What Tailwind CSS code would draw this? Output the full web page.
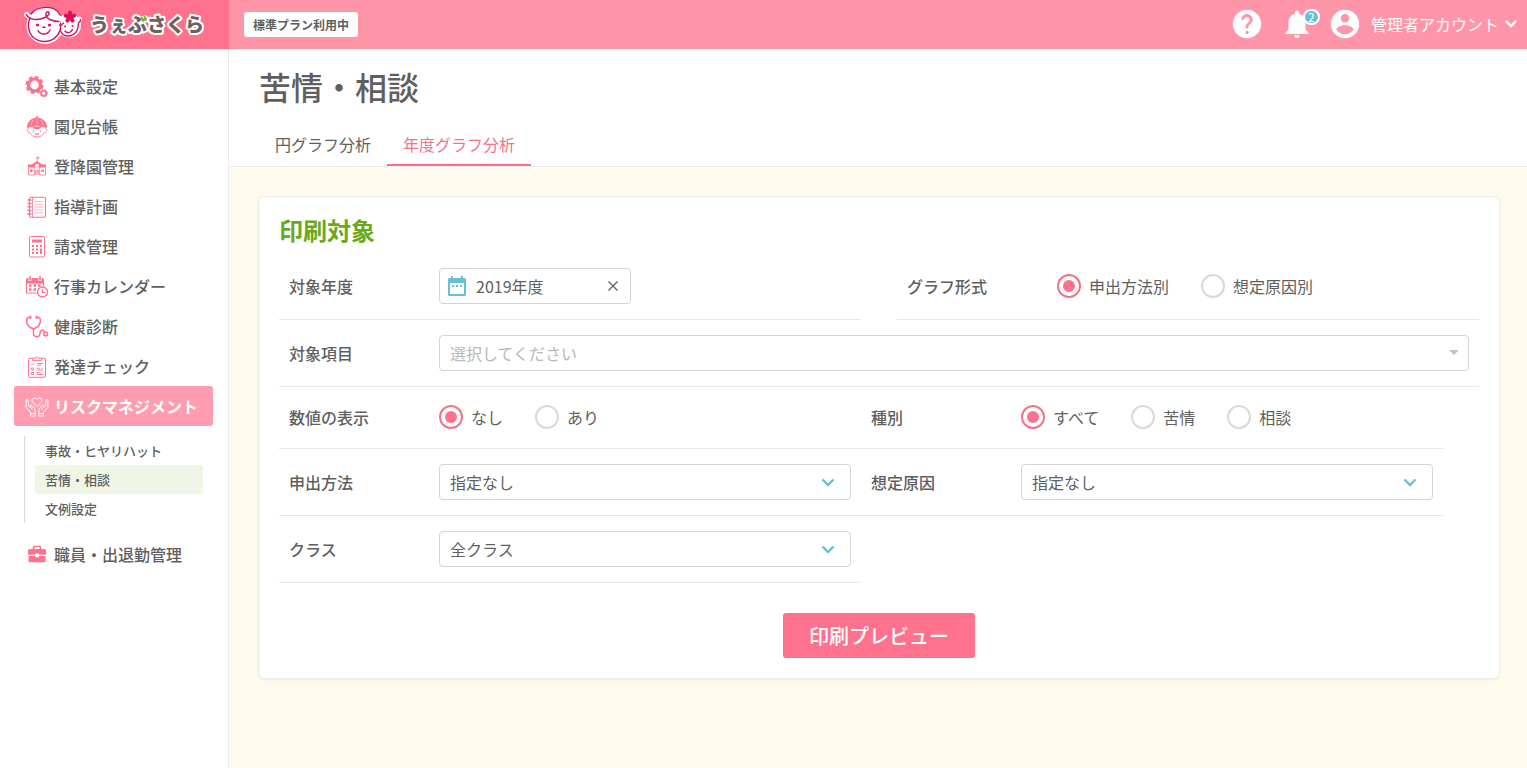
<!DOCTYPE html>
<html lang="ja">
<head>
<meta charset="utf-8">
<title>苦情・相談 | うぇぶさくら</title>
<script src="https://cdn.jsdelivr.net/npm/@tailwindcss/browser@4"></script>
</head>
<body class="flex min-h-screen flex-col bg-white font-['Noto_Sans_CJK_JP',sans-serif] text-base text-[#5f5f5f]">

<header class="flex h-[49px] bg-[#ff95a8]">
  <a href="#" aria-label="うぇぶさくら" class="block w-[229px] shrink-0 bg-[#ff728d]">
    <svg class="h-[49px] w-[229px]" viewBox="0 0 229 49">
      <g fill="#fff" stroke="#fff" stroke-width="5" stroke-linejoin="round">
        <circle cx="45" cy="25.500" r="16"/><circle cx="69" cy="25.500" r="9.500"/>
        <path d="M26.500 14.500l6 5M78 22l1.500-3" stroke-linecap="round"/>
      </g>
      <g fill="none" stroke="#cf1465" stroke-width="1.400" stroke-linecap="round" stroke-linejoin="round">
        <path d="M26 14.500c3 5 10 6 16 4 4-1 8-4 7-6s-4 0-3 3c1 4 8 6 13 6M30 18c-4 10 0 22 13 23.500 12 .5 19-9 17.500-18.500M31 14C38 5 56 5 60 15"/>
        <path d="M59.500 25c2 1 3-1 4-2M60.500 31c4 8 16 6 17.500-4l.5-4c1-.5 2-1.500 2-3.500M38 30.500c2.500 5 10 4.500 12-.5M65 31c2 3 6 2 7.500-1.500M43 27.500q1-1 2 0"/>
      </g>
      <g fill="#cf1465"><circle cx="37.500" cy="25" r="1.600"/><circle cx="49.500" cy="25" r="1.600"/><circle cx="65" cy="26.500" r="1"/><circle cx="72.500" cy="26" r="1"/></g>
      <g fill="#e00b5e" transform="translate(70 17)">
        <circle r="3"/><ellipse cy="-3.800" rx="2.100" ry="2.600"/><ellipse cy="-3.800" rx="2.100" ry="2.600" transform="rotate(72)"/><ellipse cy="-3.800" rx="2.100" ry="2.600" transform="rotate(144)"/><ellipse cy="-3.800" rx="2.100" ry="2.600" transform="rotate(216)"/><ellipse cy="-3.800" rx="2.100" ry="2.600" transform="rotate(288)"/>
      </g>
      <text x="90" y="32" font-size="19" font-weight="900" fill="#6b6260" stroke="#fff" stroke-width="4" stroke-linejoin="round" paint-order="stroke">うぇぶさくら</text>
      <path d="M141.500 17.500l1.500 3M144.500 16.500l1.500 3" stroke="#7fc31c" stroke-width="2" stroke-linecap="round"/>
    </svg>
  </a>
  <div class="flex flex-1 items-center pr-[10px] pl-[15px] text-white">
    <span class="rounded-[3px] bg-white px-[9px] text-xs leading-[25px] font-bold text-[#5f5f5f]">標準プラン利用中</span>
    <div class="ml-auto flex h-12 items-center self-start">
      <button type="button" aria-label="ヘルプ">
        <svg class="size-[34px]" viewBox="0 0 24 24" fill="currentColor"><path d="M12 2C6.480 2 2 6.480 2 12s4.480 10 10 10 10-4.480 10-10S17.520 2 12 2zm1 17h-2v-2h2v2zm2.070-7.750l-.9.920C13.450 12.900 13 13.500 13 15h-2v-.5c0-1.100.45-2.100 1.170-2.830l1.240-1.260c.37-.36.59-.86.59-1.410 0-1.100-.9-2-2-2s-2 .9-2 2H8c0-2.210 1.790-4 4-4s4 1.790 4 4c0 .88-.36 1.680-.93 2.250z"/></svg>
      </button>
      <button type="button" aria-label="お知らせ 2件" class="relative ml-4">
        <svg class="size-[34px]" viewBox="0 0 24 24" fill="currentColor"><path d="M12 22c1.100 0 2-.9 2-2h-4c0 1.100.89 2 2 2zm6-6v-5c0-3.070-1.640-5.640-4.500-6.320V4c0-.83-.67-1.500-1.500-1.500s-1.500.67-1.500 1.500v.68C7.630 5.360 6 7.920 6 11v5l-2 2v1h16v-1l-2-2z"/></svg>
        <span class="absolute top-[2px] left-[23px] h-4 w-[17px] rounded-full border-2 border-white bg-[#67bfd9] text-center text-[11px] leading-3 font-medium">2</span>
      </button>
      <button type="button" class="ml-[14px] flex items-center">
        <svg class="size-[34px]" viewBox="0 0 24 24" fill="currentColor"><path d="M12 2C6.480 2 2 6.480 2 12s4.480 10 10 10 10-4.480 10-10S17.520 2 12 2zm0 3c1.660 0 3 1.340 3 3s-1.340 3-3 3-3-1.340-3-3 1.340-3 3-3zm0 14.200c-2.500 0-4.710-1.280-6-3.220.03-1.990 4-3.080 6-3.080 1.990 0 5.970 1.090 6 3.080-1.290 1.940-3.500 3.220-6 3.220z"/></svg>
        <span class="ml-[9px] leading-6">管理者アカウント</span>
        <svg class="ml-[6px] h-2 w-3" viewBox="0 0 12 8" fill="none" stroke="currentColor" stroke-width="2.400"><path d="M.8.900L6 6.100 11.200.900"/></svg>
      </button>
    </div>
  </div>
</header>

<div class="flex flex-1">
  <nav class="w-[229px] shrink-0 border-r border-[#ebebeb] pt-[17px] pr-[15px] pl-[14px] font-medium">
    <ul class="text-[#ff728d]">
      <li><a href="#" class="flex h-10 items-center gap-[5px] pl-[11px]">
        <svg class="size-6" viewBox="0 -1 24 24" fill="none" stroke="currentColor"><circle cx="9.500" cy="10" r="6" stroke-width="3.200"/><circle cx="9.500" cy="10" r="7.800" stroke-width="2.400" stroke-dasharray="3.800 2.326"/><circle cx="18.700" cy="18.200" r="2.600" stroke-width="1.800"/><circle cx="18.700" cy="18.200" r="3.600" stroke-width="1" stroke-dasharray="1.700 1.127"/></svg>
        <span class="text-[#5f5f5f]">基本設定</span></a></li>
      <li><a href="#" class="flex h-10 items-center gap-[5px] pl-[11px]">
        <svg class="size-6" viewBox="0 -1 24 24" fill="none" stroke="currentColor"><path d="M2.500 12.500C2.500 6.500 7 3 12 3s9.500 3.500 9.500 9.500c-5-2-14-2-19 0z" fill="currentColor"/><path d="M11 2h2" stroke-width="1.500"/><path d="M12 4v6.500M8 5q-2 3-2 5.500M16 5q2 3 2 5.500" stroke="#fff" stroke-width=".5" opacity=".8"/><path d="M4 13.500c-3 0-2 4 .5 4C6 20.500 9 22 12 22s6-1.500 7.500-4.500c2.500 0 3.500-4 .5-4" stroke-width=".9"/><path d="M8 12.500q4 3 8 0z" fill="currentColor"/><path d="M8.500 15.500v1.200M15.500 15.500v1.200" stroke-width="1.300"/><path d="M10 18.500q2 1.500 4 0" stroke-width="1.100"/></svg>
        <span class="text-[#5f5f5f]">園児台帳</span></a></li>
      <li><a href="#" class="flex h-10 items-center gap-[5px] pl-[11px]">
        <svg class="size-6" viewBox="0 -1 24 24" fill="currentColor"><path d="M11.600 1.500l3.400 1.300-2.600 1.200v2.200l5 3.300H21v3H3v-3h3.600l5-3.300z"/><circle cx="12" cy="11" r="1.900" fill="#fff"/><path d="M12 10v1.200h1" fill="none" stroke="currentColor" stroke-width=".7"/><g fill="none" stroke="currentColor" stroke-width=".8"><path d="M3.500 12.500v7.500h5.800v-8M20.500 12.500v7.500h-5.800v-8M10.500 20v-4.500h3V20M12 15.500V20"/></g><path d="M5 14.500h2.500v2.500H5zM16.500 14.500H19v2.500h-2.500z"/></svg>
        <span class="text-[#5f5f5f]">登降園管理</span></a></li>
      <li><a href="#" class="flex h-10 items-center gap-[5px] pl-[11px]">
        <svg class="size-6" viewBox="0 -1 24 24" fill="none" stroke="currentColor"><rect x="4.500" y="2.200" width="16" height="20" rx="1.500" stroke-width="1.100"/><path d="M7.500 2.500v19.500" stroke-width=".8"/><path d="M3 5h3M3 8.500h3M3 12h3M3 15.500h3M3 19h3" stroke-width="1.500" stroke-linecap="round"/><path d="M10 6.500h8M10 9.300h8M10 12.100h8M10 14.900h8M10 17.700h8" stroke-width=".7" opacity=".75"/></svg>
        <span class="text-[#5f5f5f]">指導計画</span></a></li>
      <li><a href="#" class="flex h-10 items-center gap-[5px] pl-[11px]">
        <svg class="size-6" viewBox="0 -1 24 24" fill="none" stroke="currentColor"><rect x="4.500" y="1.500" width="15" height="20.500" rx="1.200" stroke-width="1"/><path d="M7 6h10" stroke-width="3"/><path d="M7 11h2M11 11h2M7 14.500h2M11 14.500h2M7 18h2M11 18h2M15 11h2" stroke-width="1.900"/><path d="M16 13.500V19" stroke-width="2"/></svg>
        <span class="text-[#5f5f5f]">請求管理</span></a></li>
      <li><a href="#" class="flex h-10 items-center gap-[5px] pl-[11px]">
        <svg class="size-6" viewBox="0 -1 24 24" fill="none" stroke="currentColor"><path d="M1.500 8V4.500q0-1 1-1h15q1 0 1 1V8z" fill="currentColor"/><path d="M5 1v5M15 1v5" stroke="#fff" stroke-width="3"/><path d="M5 1v4.500M15 1v4.500" stroke-width="1.600"/><path d="M1.500 7v10q0 1 1 1H12M18.500 7v4" stroke-width="1.200"/><path d="M4 10.500h2.500M8.500 10.500H11M13 10.500h2.500M4 14.500h2.500M8.500 14.500H11" stroke-width="2.400"/><circle cx="17.500" cy="17" r="5" stroke-width="1.300" fill="#fff"/><path d="M17.500 14v3.500h2.700" stroke-width="1.100"/></svg>
        <span class="text-[#5f5f5f]">行事カレンダー</span></a></li>
      <li><a href="#" class="flex h-10 items-center gap-[5px] pl-[11px]">
        <svg class="size-6" viewBox="0 -1 24 24" fill="none" stroke="currentColor" stroke-width="1.500" stroke-linecap="round"><path d="M5.500 2.200Q2 2 1.600 4.500C1.300 9 4 12.500 8.500 14c4.500-1.500 7.200-5 6.900-9.500Q15 2 11.500 2.200"/><path d="M5.500 1.500v1.600M11.500 1.500v1.600" stroke-width="1.800"/><path d="M8.500 14v4c0 5 6.500 5 6.500.5 0-4 4-4.500 4.500-1.200"/><circle cx="20.700" cy="19" r="1.900"/></svg>
        <span class="text-[#5f5f5f]">健康診断</span></a></li>
      <li><a href="#" class="flex h-10 items-center gap-[5px] pl-[11px]">
        <svg class="size-6" viewBox="0 -1 24 24" fill="none" stroke="currentColor"><rect x="3.500" y="3.300" width="17" height="19" rx="1.500" stroke-width="1"/><path d="M7.500 5.500V3.200h2.700q1.800-2.600 3.600 0h2.700v2.300z" fill="#fff" stroke-width=".9"/><path d="M6.300 9l1 1.200 2-2.500" stroke-width=".9"/><path d="M6.300 13h2.200v2H6.300zM6.300 17.500h2.200v2H6.300z" stroke-width=".9"/><path d="M12 8.500h6M12 10.200h4.500M11.500 13.200h3.500M16 13.200h2M11.500 15h6M11.500 17.700h4M11.500 19.500h6.500" stroke-width=".9"/></svg>
        <span class="text-[#5f5f5f]">発達チェック</span></a></li>
      <li><a href="#" class="flex h-10 items-center gap-[5px] rounded-[3px] bg-[#ff9caf] pl-[11px] font-bold text-white">
        <svg class="size-6" viewBox="0 0 24 24" fill="none" stroke="currentColor" stroke-width="1" stroke-linejoin="round"><path d="M12 12.500L7.500 8.200C5.500 5.500 9.500 2 12 5.500c2.500-3.500 6.500 0 4.500 2.700z"/><path d="M1.200 6v7.500l4.300 5V22h4.700v-5.500c0-2-3.200-5.500-4.200-5.500s-1.200.8-.6 1.700L7.500 15.500M1.200 6q1.800-1 2 .5l.3 5 2 2.500M22.800 6v7.500l-4.300 5V22h-4.700v-5.500c0-2 3.200-5.500 4.200-5.500s1.200.8.6 1.700l-2.100 2.800M22.800 6q-1.800-1-2 .5l-.3 5-2 2.500M5.500 19.500h4.700M13.800 19.500h4.700"/></svg>
        <span>リスクマネジメント</span></a>
        <ul class="mt-[10px] mr-[10px] mb-[11px] ml-[10px] border-l border-[#d9d9d9] pl-[10px] text-[13px] leading-[29px] text-[#5f5f5f]">
          <li><a href="#" class="block pl-[10px]">事故・ヒヤリハット</a></li>
          <li><a href="#" aria-current="page" class="block rounded-[2px] bg-[#f0f6e6] pl-[10px]">苦情・相談</a></li>
          <li><a href="#" class="block pl-[10px]">文例設定</a></li>
        </ul></li>
      <li><a href="#" class="flex h-10 items-center gap-[5px] pl-[11px]">
        <svg class="size-6" viewBox="0 0 24 24" fill="currentColor"><path d="M8.500 8V5.500q0-1 1-1h5q1 0 1 1V8" fill="none" stroke="currentColor" stroke-width="1.700"/><path d="M4.500 7h15Q21 7 21 8.500V12.700h-7v-1.200h-4v1.200H3V8.500Q3 7 4.500 7zM3.500 14H10v1.200h4V14h6.500v5q0 1.300-1.300 1.300H4.800q-1.300 0-1.300-1.300z"/></svg>
        <span class="text-[#5f5f5f]">職員・出退勤管理</span></a></li>
    </ul>
  </nav>

  <main class="flex min-w-0 flex-1 flex-col bg-[#fffaee]">
    <div class="border-b border-[#ebebeb] bg-white pt-[13px] pl-[30px]">
      <h1 class="text-[32px] leading-[48px] font-medium">苦情・相談</h1>
      <div role="tablist" class="mt-[14px] flex">
        <button type="button" role="tab" aria-selected="false" class="h-[42px] px-4 pb-[2px]">円グラフ分析</button>
        <button type="button" role="tab" aria-selected="true" class="h-[42px] border-b-2 border-[#f4728b] px-4 text-[#f4728b]">年度グラフ分析</button>
      </div>
    </div>

    <form class="mt-[30px] mr-7 mb-[30px] ml-[30px] flex flex-col rounded-[5px] bg-white px-5 pt-[15px] pb-5 shadow-[0_0_0_1px_#eeece6,0_1px_3px_rgba(0,0,0,0.12)]">
      <h2 class="mb-[5px] text-2xl leading-9 font-bold text-[#6aa91a]">印刷対象</h2>

      <div class="grid grid-cols-2 gap-9">
        <div class="flex h-[67px] items-center border-b border-[#e8e8e8] px-[10px]">
          <label for="year" class="w-[150px] shrink-0 font-medium">対象年度</label>
          <div class="flex h-9 w-[192px] items-center rounded-[4px] border border-[#d5d5d5] px-2">
            <svg class="h-5 w-[18px] shrink-0" viewBox="0 0 18 20"><path d="M3 0h2v2h8V0h2v2h1.500Q18 2 18 3.500v15q0 1.500-1.500 1.500h-15Q0 20 0 18.500v-15Q0 2 1.500 2H3zM2 7v11h14V7z" fill="#67bfd9" fill-rule="evenodd"/><path d="M4 9h2v2H4zM8 9h2v2H8zM12 9h2v2h-2z" fill="#67bfd9"/></svg>
            <input id="year" type="text" value="2019年度" class="ml-[10px] w-0 flex-1 outline-none">
            <button type="button" aria-label="クリア" class="flex size-[18px] items-center justify-center"><svg class="size-[10px]" viewBox="0 0 10 10" stroke="#5f5f5f" stroke-width="1.300"><path d="M.5.500l9 9M9.500.500l-9 9"/></svg></button>
          </div>
        </div>
        <div role="radiogroup" aria-labelledby="l-graph" class="flex h-[67px] items-center border-b border-[#e8e8e8] px-[10px]">
          <span id="l-graph" class="w-[150px] shrink-0 font-medium">グラフ形式</span>
          <div class="flex gap-8">
            <label class="flex items-center gap-2"><input type="radio" name="graph" checked class="size-6 appearance-none rounded-full border-2 border-[#d9d9d9] bg-clip-content p-1 checked:border-[#f0748a] checked:bg-[#ff728d]">申出方法別</label>
            <label class="flex items-center gap-2"><input type="radio" name="graph" class="size-6 appearance-none rounded-full border-2 border-[#d9d9d9] bg-clip-content p-1 checked:border-[#f0748a] checked:bg-[#ff728d]">想定原因別</label>
          </div>
        </div>
      </div>

      <div class="flex h-[67px] items-center border-b border-[#e8e8e8] px-[10px]">
        <label for="item" class="w-[150px] shrink-0 font-medium">対象項目</label>
        <div class="relative flex-1">
          <select id="item" class="block h-9 w-full appearance-none rounded-[4px] border border-[#d5d5d5] px-[10px] text-[#b8b8b8]"><option>選択してください</option></select>
          <svg class="pointer-events-none absolute top-[15px] right-[10px] h-[5px] w-[10px]" viewBox="0 0 10 5" fill="#c4c4c4"><path d="M0 0h10L5 5z"/></svg>
        </div>
      </div>

      <div class="mr-9 grid grid-cols-2">
        <div role="radiogroup" aria-labelledby="l-num" class="flex h-[62px] items-center border-b border-[#e8e8e8] px-[10px] pb-px">
          <span id="l-num" class="w-[150px] shrink-0 font-medium">数値の表示</span>
          <div class="flex gap-8">
            <label class="flex items-center gap-2"><input type="radio" name="num" checked class="size-6 appearance-none rounded-full border-2 border-[#d9d9d9] bg-clip-content p-1 checked:border-[#f0748a] checked:bg-[#ff728d]">なし</label>
            <label class="flex items-center gap-2"><input type="radio" name="num" class="size-6 appearance-none rounded-full border-2 border-[#d9d9d9] bg-clip-content p-1 checked:border-[#f0748a] checked:bg-[#ff728d]">あり</label>
          </div>
        </div>
        <div role="radiogroup" aria-labelledby="l-kind" class="flex h-[62px] items-center border-b border-[#e8e8e8] px-[10px] pb-px">
          <span id="l-kind" class="w-[150px] shrink-0 font-medium">種別</span>
          <div class="flex gap-8">
            <label class="flex items-center gap-2"><input type="radio" name="kind" checked class="size-6 appearance-none rounded-full border-2 border-[#d9d9d9] bg-clip-content p-1 checked:border-[#f0748a] checked:bg-[#ff728d]">すべて</label>
            <label class="flex items-center gap-2"><input type="radio" name="kind" class="size-6 appearance-none rounded-full border-2 border-[#d9d9d9] bg-clip-content p-1 checked:border-[#f0748a] checked:bg-[#ff728d]">苦情</label>
            <label class="flex items-center gap-2"><input type="radio" name="kind" class="size-6 appearance-none rounded-full border-2 border-[#d9d9d9] bg-clip-content p-1 checked:border-[#f0748a] checked:bg-[#ff728d]">相談</label>
          </div>
        </div>

        <div class="flex h-[67px] items-center border-b border-[#e8e8e8] px-[10px]">
          <label for="method" class="w-[150px] shrink-0 font-medium">申出方法</label>
          <div class="relative flex-1">
            <select id="method" class="block h-9 w-full appearance-none rounded-[4px] border border-[#d5d5d5] px-[10px]"><option>指定なし</option></select>
            <svg class="pointer-events-none absolute top-[14px] right-4 h-[9px] w-[14px]" viewBox="0 0 14 9" fill="none" stroke="#67bfd9" stroke-width="2.400"><path d="M1.500 1.500L7 7l5.500-5.500"/></svg>
          </div>
        </div>
        <div class="flex h-[67px] items-center border-b border-[#e8e8e8] px-[10px]">
          <label for="cause" class="w-[150px] shrink-0 font-medium">想定原因</label>
          <div class="relative flex-1">
            <select id="cause" class="block h-9 w-full appearance-none rounded-[4px] border border-[#d5d5d5] px-[10px]"><option>指定なし</option></select>
            <svg class="pointer-events-none absolute top-[14px] right-4 h-[9px] w-[14px]" viewBox="0 0 14 9" fill="none" stroke="#67bfd9" stroke-width="2.400"><path d="M1.500 1.500L7 7l5.500-5.500"/></svg>
          </div>
        </div>

        <div class="flex h-[67px] items-center border-b border-[#e8e8e8] px-[10px]">
          <label for="class" class="w-[150px] shrink-0 font-medium">クラス</label>
          <div class="relative flex-1">
            <select id="class" class="block h-9 w-full appearance-none rounded-[4px] border border-[#d5d5d5] px-[10px]"><option>全クラス</option></select>
            <svg class="pointer-events-none absolute top-[14px] right-4 h-[9px] w-[14px]" viewBox="0 0 14 9" fill="none" stroke="#67bfd9" stroke-width="2.400"><path d="M1.500 1.500L7 7l5.500-5.500"/></svg>
          </div>
        </div>
      </div>

      <button type="submit" class="mt-[30px] h-[45px] w-[192px] self-center rounded-[3px] bg-[#ff728d] text-xl font-medium text-white">印刷プレビュー</button>
    </form>
  </main>
</div>
</body>
</html>
